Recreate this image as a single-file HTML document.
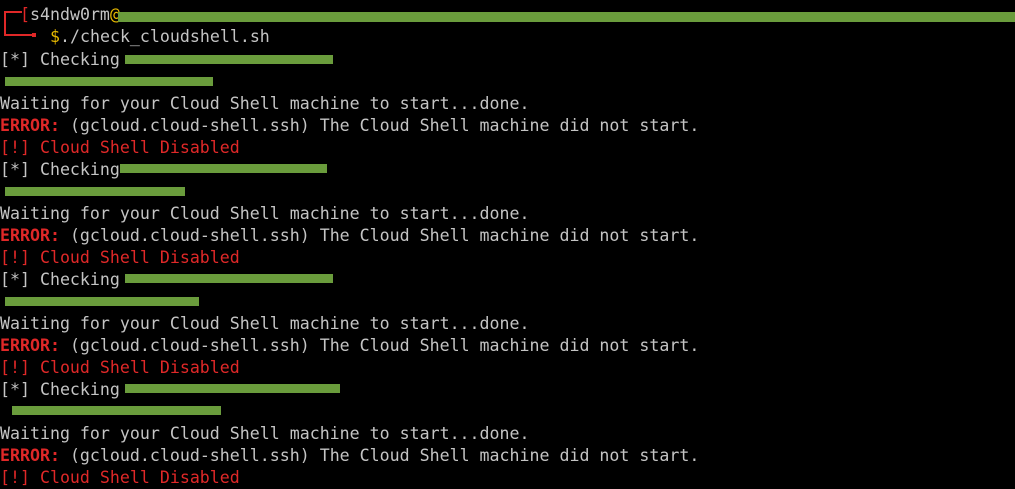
<!DOCTYPE html>
<html><head><style>
body{margin:0;background:#000;width:1015px;height:489px;overflow:hidden;position:relative;font-family:"DejaVu Sans Mono","Liberation Mono",monospace;font-size:16.6px;color:#c4c4c4}
.l{position:absolute;left:0;height:22px;line-height:22px;white-space:pre;margin-top:2px}
.r{color:#e02828}
.e{color:#e02828;font-weight:bold}
.y{color:#e6b800}
.b{position:absolute;background:#6a9c3c;height:9px}
.sq{position:absolute;background:#e02828}
</style></head><body>
<div class="sq" style="left:4px;top:11px;width:2px;height:25px"></div>
<div class="sq" style="left:4px;top:11px;width:18px;height:2px"></div>
<div class="sq" style="left:4px;top:34px;width:30px;height:2px"></div>
<div class="sq" style="left:32px;top:33px;width:4px;height:4px"></div>
<div class="l" style="top:2px;left:20px"><span class="r">[</span>s4ndw0rm<span class="y">@</span></div>
<div class="l" style="top:24px;left:50px"><span class="y">$</span>./check_cloudshell.sh</div>

<div class="l" style="top:47px">[*] Checking</div>
<div class="l" style="top:91px">Waiting for your Cloud Shell machine to start...done.</div>
<div class="l" style="top:113px"><span class="e">ERROR:</span> (gcloud.cloud-shell.ssh) The Cloud Shell machine did not start.</div>
<div class="l r" style="top:135px">[!] Cloud Shell Disabled</div>

<div class="l" style="top:157px">[*] Checking</div>
<div class="l" style="top:201px">Waiting for your Cloud Shell machine to start...done.</div>
<div class="l" style="top:223px"><span class="e">ERROR:</span> (gcloud.cloud-shell.ssh) The Cloud Shell machine did not start.</div>
<div class="l r" style="top:245px">[!] Cloud Shell Disabled</div>

<div class="l" style="top:267px">[*] Checking</div>
<div class="l" style="top:311px">Waiting for your Cloud Shell machine to start...done.</div>
<div class="l" style="top:333px"><span class="e">ERROR:</span> (gcloud.cloud-shell.ssh) The Cloud Shell machine did not start.</div>
<div class="l r" style="top:355px">[!] Cloud Shell Disabled</div>

<div class="l" style="top:377px">[*] Checking</div>
<div class="l" style="top:421px">Waiting for your Cloud Shell machine to start...done.</div>
<div class="l" style="top:443px"><span class="e">ERROR:</span> (gcloud.cloud-shell.ssh) The Cloud Shell machine did not start.</div>
<div class="l r" style="top:465px">[!] Cloud Shell Disabled</div>

<div class="b" style="left:118px;top:12px;width:897px;height:10px"></div>
<div class="b" style="left:125px;top:55px;width:208px"></div>
<div class="b" style="left:5px;top:77px;width:208px"></div>
<div class="b" style="left:120px;top:164px;width:207px"></div>
<div class="b" style="left:5px;top:187px;width:180px"></div>
<div class="b" style="left:125px;top:274px;width:208px"></div>
<div class="b" style="left:5px;top:297px;width:194px"></div>
<div class="b" style="left:125px;top:384px;width:215px"></div>
<div class="b" style="left:12px;top:406px;width:209px"></div>
</body></html>
